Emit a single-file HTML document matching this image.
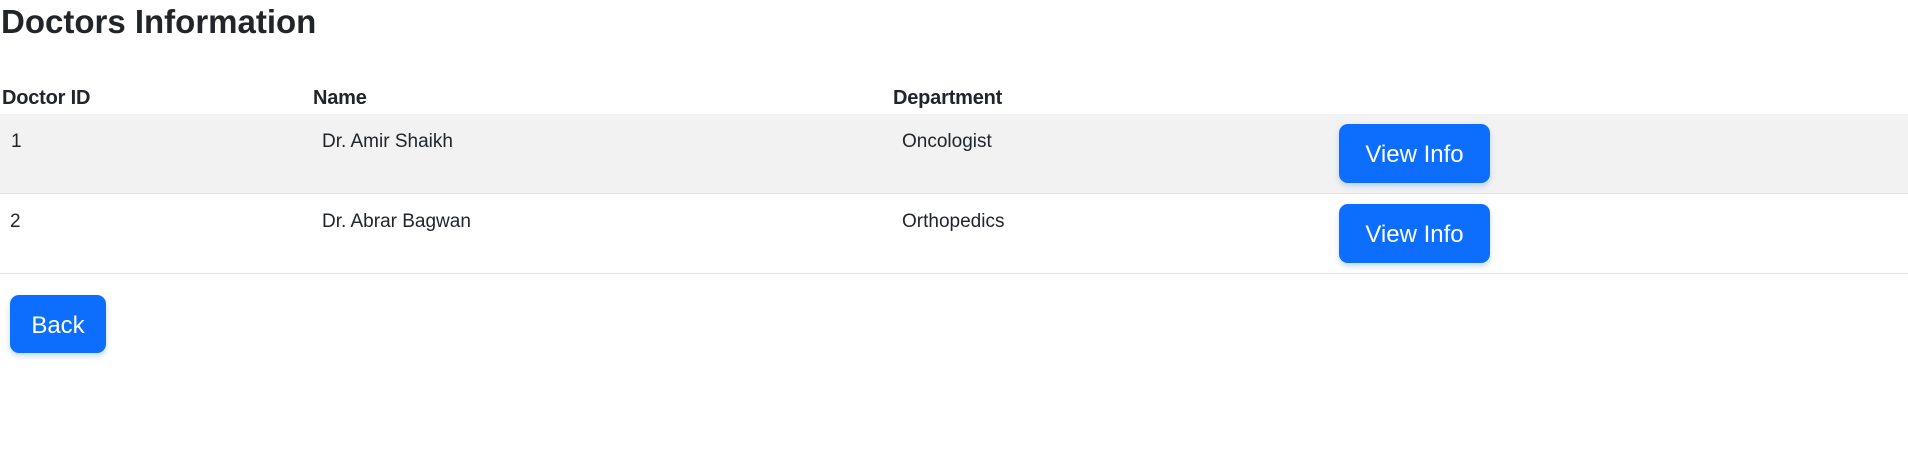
<!DOCTYPE html>
<html><head><style>
body{margin:0;width:1908px;height:462px;background:#fff;font-family:"Liberation Sans",sans-serif;color:#212529;position:relative;overflow:hidden}
.a{position:absolute;white-space:nowrap}
h1{position:absolute;margin:0;left:1px;top:3px;font-size:33px;font-weight:bold;letter-spacing:0px;color:#212529}
.h{font-weight:bold;font-size:20px;top:87px;letter-spacing:-0.2px}
.d{font-size:19px}
.row{position:absolute;left:0;width:1908px;border-bottom:1.5px solid #dee2e6}
.btn{position:absolute;background:#0d6efd;color:#fff;border-radius:9px;font-size:24px;display:flex;align-items:center;justify-content:center;box-shadow:0 3px 6px rgba(13,110,253,.25);padding-top:3px;box-sizing:border-box}
</style></head><body>
<h1>Doctors Information</h1>
<div class="a h" style="left:2px">Doctor ID</div>
<div class="a h" style="left:313px">Name</div>
<div class="a h" style="left:893px">Department</div>
<div class="row" style="top:114px;height:79px;background:#f2f2f2"></div>
<div class="row" style="top:194px;height:79px"></div>
<div class="a d" style="left:11px;top:131px">1</div>
<div class="a d" style="left:322px;top:131px">Dr. Amir Shaikh</div>
<div class="a d" style="left:902px;top:131px">Oncologist</div>
<div class="btn" style="left:1339px;top:124px;width:151px;height:59px">View Info</div>
<div class="a d" style="left:10px;top:211px">2</div>
<div class="a d" style="left:322px;top:211px">Dr. Abrar Bagwan</div>
<div class="a d" style="left:902px;top:211px">Orthopedics</div>
<div class="btn" style="left:1339px;top:204px;width:151px;height:59px">View Info</div>
<div class="btn" style="left:10px;top:295px;width:96px;height:58px">Back</div>
</body></html>
